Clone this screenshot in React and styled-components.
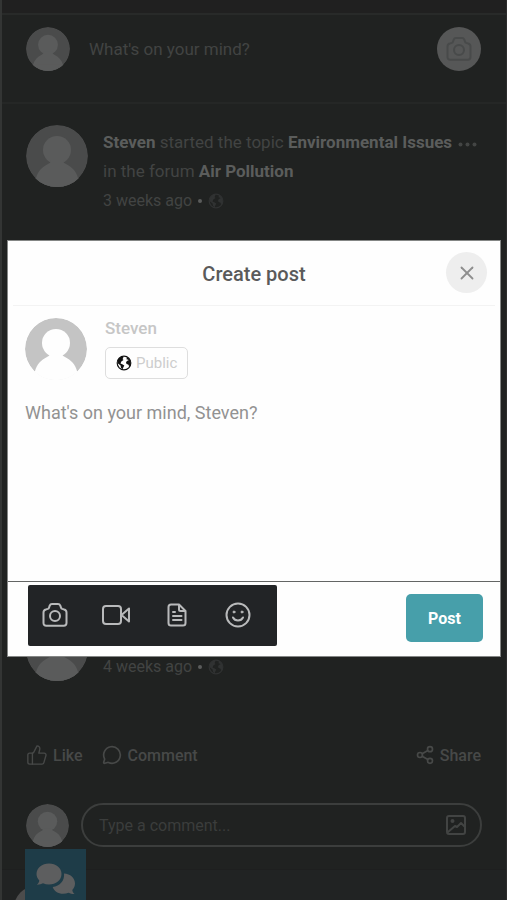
import React from "react";
import styled, { createGlobalStyle } from "styled-components";
import { ThumbsUp, MessageCircle, Share2, X } from "lucide-react";

const GlobalStyle = createGlobalStyle`
  *, *::before, *::after { box-sizing: border-box; }
  html, body { margin: 0; background: #202221; }
  body, button, input, textarea { font-family: Roboto, "Liberation Sans", sans-serif; }
  button { border: 0; padding: 0; background: none; color: inherit; cursor: pointer; }
`;

const Page = styled.div`
  height: 100vh;
  overflow: hidden;
  display: flex;
  flex-direction: column;
  background: #202221;
  border-left: 2px solid #333534;
  border-right: 1px solid #2c2c2c;
  color: #424443;
`;

const TopStrip = styled.div`
  flex: none;
  height: 15px;
  background: #202020;
  border-bottom: 2px solid #282a29;
`;

const Composer = styled.section`
  flex: none;
  display: flex;
  align-items: center;
  gap: 19px;
  padding: 12px 25px 0 24px;
`;

const Divider = styled.hr`
  flex: none;
  width: 100%;
  margin: 31px 0 0;
  border: 0;
  border-top: 2px solid #252726;
`;

const ComposerPrompt = styled.button`
  flex: 1;
  text-align: left;
  font-size: 17px;
  line-height: 24px;
`;

const CameraButton = styled.button`
  display: grid;
  place-items: center;
  width: 44px;
  height: 44px;
  border-radius: 50%;
  background: #565757;
  color: #484a4a;
`;

const AvatarSvg = styled.svg`
  flex: none;
  display: block;
  width: ${(p) => p.$size}px;
  height: ${(p) => p.$size}px;
  border-radius: 50%;
`;

const Post = styled.article`
  flex: none;
  display: flex;
  align-items: flex-start;
  gap: 15px;
  padding: 21px 25px 0 24px;
  min-height: ${(p) => p.$minHeight}px;
`;

const PostBody = styled.div`
  flex: 1;
  padding-top: ${(p) => p.$top}px;
  font-size: 17px;
  line-height: 29px;
`;

const PostHead = styled.div`
  display: flex;
  justify-content: space-between;
  align-items: flex-start;
`;

const PostTitle = styled.p`
  margin: 0;
  white-space: nowrap;
`;

const Strong = styled.a`
  color: #5b5d5c;
  font-weight: 700;
  text-decoration: none;
`;

const MoreButton = styled.button`
  display: flex;
  height: 32px;
  align-items: center;
  margin-right: 4px;
`;

const TimeRow = styled.div`
  display: flex;
  align-items: center;
  gap: 6px;
  font-size: 16px;
  line-height: 30px;
  color: #424443;
`;

const Dot = styled.span`
  width: 4px;
  height: 4px;
  border-radius: 50%;
  background: #5a5c5b;
`;

const Actions = styled.div`
  flex: none;
  display: flex;
  align-items: center;
  gap: 20px;
  padding: 0 25px 0 24px;
`;

const ActionButton = styled.button`
  display: flex;
  align-items: center;
  gap: 5px;
  height: 24px;
  margin-left: ${(p) => (p.$end ? "auto" : "0")};
  font-size: 16px;
  font-weight: 500;
  color: #474948;
`;

const CommentRow = styled.form`
  flex: none;
  display: flex;
  align-items: center;
  gap: 12px;
  padding: 36px 24px 0 24px;
`;

const CommentBox = styled.label`
  flex: 1;
  display: flex;
  align-items: center;
  height: 44px;
  padding: 0 14px 0 16px;
  border: 2px solid #3c3e3d;
  border-radius: 22px;
`;

const CommentInput = styled.input`
  flex: 1;
  min-width: 0;
  padding: 0;
  border: 0;
  outline: 0;
  background: none;
  font-size: 16px;
  &::placeholder { color: #3b3d3c; opacity: 1; }
`;

const BottomBar = styled.div`
  flex: none;
  margin-top: 22px;
  padding: 16px 12px 0;
  border-top: 1px solid #1e1f1f;
  background: #212323;
`;

const BottomCircle = styled.div`
  width: 44px;
  height: 44px;
  border-radius: 50%;
  background: #4c4c4c;
`;

const ChatButton = styled.button`
  position: fixed;
  left: 25px;
  bottom: 0;
  display: grid;
  place-items: center;
  width: 61px;
  height: 51px;
  padding-top: 8px;
  background: #1e3c48;
  color: #5d5e5f;
`;

const Overlay = styled.div`
  position: fixed;
  inset: 0;
  display: flex;
  align-items: center;
  padding: 0 6px 4px 7px;
`;

const Modal = styled.section`
  flex: 1;
  background: #fefefe;
  border: 1px solid #848685;
`;

const ModalHeader = styled.header`
  display: grid;
  grid-template-columns: 1fr auto 1fr;
  align-items: center;
  height: 65px;
  margin: 0 5px;
  padding-right: 8px;
  border-bottom: 1px solid #f3f3f3;
`;

const ModalTitle = styled.h2`
  grid-column: 2;
  margin: 2px 0 0 8px;
  font-size: 20px;
  font-weight: 500;
  line-height: 26px;
  color: #5a5a5a;
`;

const CloseButton = styled.button`
  display: grid;
  place-items: center;
  justify-self: end;
  width: 41px;
  height: 41px;
  border-radius: 50%;
  background: #eeeeee;
  color: #8e8e8e;
`;

const Author = styled.div`
  display: flex;
  gap: 18px;
  padding: 12px 17px 0;
`;

const AuthorInfo = styled.div`
  display: flex;
  flex-direction: column;
  align-items: flex-start;
  gap: 9px;
`;

const AuthorName = styled.span`
  font-size: 17px;
  font-weight: 500;
  line-height: 20px;
  color: #c6c6c6;
`;

const PrivacyButton = styled.button`
  display: flex;
  align-items: center;
  gap: 4px;
  height: 32px;
  padding: 0 10px;
  border: 1px solid #dedede;
  border-radius: 5px;
  font-size: 15px;
  color: #cdcdcd;
`;

const PostInput = styled.textarea`
  display: block;
  width: 100%;
  height: 201px;
  padding: 20px 17px;
  border: 0;
  outline: 0;
  resize: none;
  background: none;
  font-size: 18px;
  line-height: 26px;
  &::placeholder { color: #929292; opacity: 1; }
`;

const ModalFooter = styled.footer`
  display: flex;
  justify-content: space-between;
  align-items: center;
  padding: 3px 17px 10px 20px;
  border-top: 1px solid #636564;
`;

const Toolbar = styled.div`
  display: flex;
  align-items: center;
  width: 249px;
  height: 61px;
  padding-left: 13px;
  gap: 33px;
  border-radius: 2px;
  background: #222426;
  color: #b9babb;
`;

const ToolButton = styled.button`
  display: grid;
  place-items: center;
  width: 28px;
  height: 30px;
`;

const SubmitButton = styled.button`
  width: 77px;
  height: 48px;
  margin-top: 6px;
  border-radius: 5px;
  background: #479faa;
  color: #ffffff;
  font-size: 16px;
  font-weight: 700;
`;

function Avatar({ size, disc = "#4a4b4b", figure = "#5a5b5b" }) {
  return (
    <AvatarSvg $size={size} viewBox="0 0 62 62" role="img" aria-label="Steven">
      <circle cx="31" cy="31" r="31" fill={disc} />
      <circle cx="31" cy="25" r="14" fill={figure} />
      <path d="M25 35h12c0 2 1 3 3 4 6 3 10 7 12 14v9H10v-9c2-7 6-11 12-14 2-1 3-2 3-4z" fill={figure} />
      <path d="M9 53h44v9H9z" fill={figure} />
    </AvatarSvg>
  );
}

function Globe({ color }) {
  return (
    <svg width="16" height="16" viewBox="0 0 16 16" fill={color} aria-hidden="true">
      <circle cx="8" cy="8" r="6.800" fill="none" stroke={color} strokeWidth="1.200" />
      <path d="M1.500 5.500C2.300 3.300 4 1.900 6.300 1.400L7.500 2.600 6.500 4l1 .9-2.200 1.700-.8 1.900 1.800.7 2 1.400-.9 1.600-1 2.400-1.500-2-.3-2.200L2 8.500z" />
      <path d="M10.800 2l2.300 1.500L14.600 6.500v3l-1.300 2-1.100-2-1.700-.6-.5-1.600 1.200-1.500 1.300-.3-.4-1-1.500-.1z" />
    </svg>
  );
}

const line = {
  fill: "none",
  stroke: "currentColor",
  strokeWidth: 2,
  strokeLinecap: "round",
  strokeLinejoin: "round",
  "aria-hidden": true,
};

function CameraIcon() {
  return (
    <svg width="26" height="26" viewBox="0 0 26 26" {...line}>
      <path d="M1.500 10.500c0-1.600.8-2.600 2.300-3l2-.6c.6-.2 1-.6 1.200-1.200l.7-2C8.100 2.600 8.900 2 10 2h6c1.100 0 1.900.6 2.300 1.700l.7 2c.2.600.6 1 1.200 1.200l2 .6c1.500.4 2.300 1.400 2.300 3v10.500c0 1.700-1 2.700-2.700 2.700H4.200c-1.700 0-2.700-1-2.700-2.700z" />
      <circle cx="13" cy="14" r="5" />
    </svg>
  );
}

function VideoIcon() {
  return (
    <svg width="28" height="24" viewBox="0 0 28 24" {...line}>
      <rect x="1" y="3" width="18" height="18" rx="3" />
      <path d="M19.500 12l7.500-6.500v13z" />
    </svg>
  );
}

function DocumentIcon() {
  return (
    <svg width="20" height="24" viewBox="0 0 20 24" {...line}>
      <path d="M4 1.500h8L18.500 8v12c0 1.600-.9 2.500-2.500 2.500H4c-1.600 0-2.500-.9-2.500-2.500V4c0-1.600.9-2.500 2.500-2.500z" />
      <path d="M12 2v4.500c0 1 .6 1.500 1.500 1.500H18M6 9h2M6 13h8.500M6 17h8.500" />
    </svg>
  );
}

function SmileIcon() {
  return (
    <svg width="26" height="26" viewBox="0 0 26 26" {...line}>
      <circle cx="13" cy="13" r="11.500" />
      <path d="M8 15.500c1 2 2.800 3 5 3s4-1 5-3" />
      <circle cx="9" cy="10" r="1" fill="currentColor" strokeWidth="1" />
      <circle cx="17" cy="10" r="1" fill="currentColor" strokeWidth="1" />
    </svg>
  );
}

function ImageIcon() {
  return (
    <svg width="20" height="20" viewBox="0 0 20 20" {...line} color="#424443">
      <rect x="1" y="1" width="18" height="18" rx="2" />
      <path d="M2 17l7-6 2 1 4-4 4 4" />
      <circle cx="6.500" cy="6" r="1" />
    </svg>
  );
}

function ChatIcon() {
  return (
    <svg width="40" height="32" viewBox="0 0 40 32" fill="currentColor" aria-hidden="true">
      <path d="M13 .5c7 0 12.500 4.600 12.500 10.500S20 21.500 13 21.500c-2.200 0-4.200-.4-6-1.200-1.800 1-3.800 1.500-6 1.400 1.300-1.200 2.100-2.600 2.300-4.300C1.600 15.600.5 13.400.5 11 .5 5.100 6 .5 13 .5z" />
      <path d="M28 10.500c6.300.3 11 4.600 11 10 0 2.400-1 4.600-2.700 6.400.2 1.600 1 3 2.300 4.200-2.200.1-4.200-.4-6-1.400-1.600.7-3.500 1.100-5.500 1.100-5 0-9.100-2.800-10.400-6.800C24 23.300 28.800 17.500 28 10.500z" />
    </svg>
  );
}

function MoreIcon() {
  return (
    <svg width="19" height="5" viewBox="0 0 19 5" fill="#434544" aria-hidden="true">
      <circle cx="2.500" cy="2.500" r="2" />
      <circle cx="9.500" cy="2.500" r="2" />
      <circle cx="16.500" cy="2.500" r="2" />
    </svg>
  );
}

function PostTime({ children }) {
  return (
    <TimeRow>
      <time>{children}</time>
      <Dot />
      <Globe color="#303232" />
    </TimeRow>
  );
}

function CreatePost() {
  return (
    <Overlay>
      <Modal role="dialog" aria-modal="true" aria-labelledby="create-title">
        <ModalHeader>
          <ModalTitle id="create-title">Create post</ModalTitle>
          <CloseButton aria-label="Close">
            <X size={22} strokeWidth={2} />
          </CloseButton>
        </ModalHeader>
        <Author>
          <Avatar size={62} disc="#c4c4c4" figure="#fefefe" />
          <AuthorInfo>
            <AuthorName>Steven</AuthorName>
            <PrivacyButton>
              <Globe color="#111111" />
              Public
            </PrivacyButton>
          </AuthorInfo>
        </Author>
        <PostInput aria-label="Post text" placeholder="What's on your mind, Steven?" />
        <ModalFooter>
          <Toolbar>
            <ToolButton aria-label="Add photo"><CameraIcon /></ToolButton>
            <ToolButton aria-label="Add video"><VideoIcon /></ToolButton>
            <ToolButton aria-label="Add document"><DocumentIcon /></ToolButton>
            <ToolButton aria-label="Add emoji"><SmileIcon /></ToolButton>
          </Toolbar>
          <SubmitButton>Post</SubmitButton>
        </ModalFooter>
      </Modal>
    </Overlay>
  );
}

export default function App() {
  return (
    <>
      <GlobalStyle />
      <Page>
        <TopStrip />
        <Composer>
          <Avatar size={44} />
          <ComposerPrompt>What's on your mind?</ComposerPrompt>
          <CameraButton aria-label="Add photo"><CameraIcon /></CameraButton>
        </Composer>
        <Divider />
        <Post $minHeight={494}>
          <Avatar size={62} />
          <PostBody $top={3}>
            <PostHead>
              <PostTitle>
                <Strong href="#steven">Steven</Strong> started the topic{" "}
                <Strong href="#topic">Environmental Issues</Strong>
                <br />
                in the forum <Strong href="#forum">Air Pollution</Strong>
              </PostTitle>
              <MoreButton aria-label="More options"><MoreIcon /></MoreButton>
            </PostHead>
            <PostTime>3 weeks ago</PostTime>
          </PostBody>
        </Post>
        <Post $minHeight={145}>
          <Avatar size={62} />
          <PostBody $top={33}>
            <PostTime>4 weeks ago</PostTime>
          </PostBody>
        </Post>
        <Actions>
          <ActionButton><ThumbsUp size={22} strokeWidth={1.5} />Like</ActionButton>
          <ActionButton><MessageCircle size={20} strokeWidth={2} />Comment</ActionButton>
          <ActionButton $end><Share2 size={20} strokeWidth={2} />Share</ActionButton>
        </Actions>
        <CommentRow>
          <Avatar size={43} />
          <CommentBox>
            <CommentInput aria-label="Comment" placeholder="Type a comment..." />
            <ImageIcon />
          </CommentBox>
        </CommentRow>
        <BottomBar><BottomCircle /></BottomBar>
        <ChatButton aria-label="Open chat"><ChatIcon /></ChatButton>
      </Page>
      <CreatePost />
    </>
  );
}
